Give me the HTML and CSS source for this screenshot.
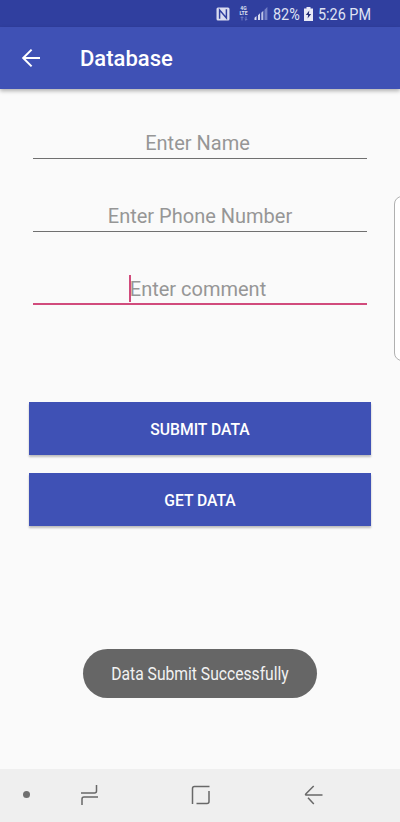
FILE: index.html
```html
<!DOCTYPE html>
<html lang="en">
<head>
<meta charset="utf-8">
<meta name="viewport" content="width=device-width">
<title>Database</title>
<link rel="stylesheet" href="styles.css">
</head>
<body>
<div class="screen">
  <div class="status">
    <svg class="nfc" width="14" height="14" viewBox="0 0 14 14"><rect x=".5" y=".5" width="13" height="13" rx="1.5" fill="#d9dcf0"/><path d="M3.6 11.8V3L10.4 11V2.2" fill="none" stroke="#303f9f" stroke-width="1.5"/></svg>
    <div class="lte"><span class="tiny">4G</span><span class="tiny">LTE</span>
      <svg width="8" height="5" viewBox="0 0 8 5"><path d="M2 4.5V.8M.7 2L2 .7 3.3 2M6 .5v3.7M4.7 3L6 4.3 7.3 3" fill="none" stroke="#7681c8" stroke-width=".9"/></svg>
    </div>
    <svg class="signal" width="14" height="14" viewBox="0 0 14 14"><path d="M.5 13v-2.3l2-1.7v4zM4 13V8.3l2-2V13z" fill="#d9dcf0"/><path d="M7.3 13V5.8l2-2V13z" fill="#bcc3e8"/><path d="M10.5 13V2.8L13.4 0v13z" fill="#7480c6"/></svg>
    <span class="percent"><span class="condensed">82%</span></span>
    <svg class="battery" width="9" height="14" viewBox="0 0 9 14"><path d="M2.5 0h4v1.5H9V14H0V1.5h2.5z" fill="#e8eaf6"/><path d="M5.3 3.4L1.8 8h2.3l-.5 3.5L7.2 7H4.9z" fill="#263078"/></svg>
    <span class="time"><span class="condensed">5:26 PM</span></span>
  </div>
  <header class="appbar">
    <svg class="back" width="20" height="20" viewBox="0 0 20 20"><path d="M19 10H2.3M10.6 1.6L2.2 10l8.4 8.4" fill="none" stroke="#fff" stroke-width="2"/></svg>
    <h1>Database</h1>
  </header>
  <main class="content">
    <div class="field name">Enter Name</div>
    <div class="field">Enter Phone Number</div>
    <div class="field focused"><span class="hint">Enter comment<i class="caret"></i></span></div>
    <div class="actions">
      <button class="action">SUBMIT DATA</button>
      <button class="action">GET DATA</button>
    </div>
  </main>
  <div class="edge-handle"></div>
  <div class="toast"><span class="toast-text">Data Submit Successfully</span></div>
  <nav class="navbar">
    <span class="dot"></span>
    <svg class="recents" width="20" height="22" viewBox="0 0 20 22"><path d="M1 9h13.5q2 0 2-2V1M18 13H4q-2 0-2 2v6" fill="none" stroke="#686868" stroke-width="1.5"/></svg>
    <svg class="home" width="20" height="20" viewBox="0 0 20 20"><path d="M1.5 19V3.5q0-2 2-2H18.5M18 6v10.5q0 2-2 2H5.5" fill="none" stroke="#686868" stroke-width="1.5"/></svg>
    <svg class="nav-back" width="20" height="20" viewBox="0 0 20 20"><path d="M18.5 10H2q-1-.3 0-1.3L9.7 1M4 12.8l5.8 6.2" fill="none" stroke="#686868" stroke-width="1.5"/></svg>
  </nav>
</div>
</body>
</html>
```
FILE: styles.css
```css
* { box-sizing: border-box; }
body { margin: 0; font-family: Roboto, sans-serif; background: #fafafa; }
.screen { position: relative; width: 400px; height: 822px; overflow: hidden; display: flex; flex-direction: column; background: #fafafa; }

.status { height: 27px; flex: none; display: flex; align-items: center; padding-left: 216px; background: #303f9f; color: #dfe2f3; font-size: 16px; white-space: nowrap; }
.nfc { margin-right: 9px; }
.lte { width: 9px; height: 15px; margin-right: 6px; display: flex; flex-direction: column; align-items: center; }
.tiny { height: 5px; font-size: 5px; line-height: 5px; font-weight: 700; }
.signal { margin-right: 5px; }
.percent { width: 26px; margin-right: 5px; }
.battery { margin-right: 5px; }
.time { width: 54px; }
.condensed { display: inline-block; padding-top: 1px; transform: scaleX(.9); transform-origin: left; }

.appbar { height: 62px; flex: none; display: flex; align-items: center; padding-left: 21px; background: #3f51b5; color: #fff; box-shadow: 0 2px 4px rgba(0, 0, 0, .3); }
.back { margin-right: 39px; }
.appbar h1 { margin: 0; padding-top: 2px; font-size: 22px; line-height: 28px; font-weight: 500; }

.content { flex: 1; padding: 35px 29px 0; }
.field { height: 35px; margin: 0 4px 38px; border-bottom: 1px solid #707070; text-align: center; color: #969696; font-size: 20px; line-height: 38px; }
.field.name { padding-right: 5px; line-height: 39px; }
.field.focused { height: 35px; padding-right: 4px; border-bottom: 2px solid #d14b7c; }
.hint { position: relative; }
.caret { position: absolute; left: -1px; top: -2px; width: 2px; height: 27px; background: #d14b7c; }
.actions { display: flex; flex-direction: column; gap: 18px; padding-top: 59px; }
.action { height: 53px; padding: 0; border: 0; background: #3f51b5; color: #fff; font: 500 15.7px/55px Roboto, sans-serif; box-shadow: 0 2px 2px rgba(0, 0, 0, .25); }

.edge-handle { position: absolute; left: 394px; top: 196px; width: 20px; height: 165px; border: 1px solid #b0b0b0; border-radius: 8px; background: #fff; }
.toast { position: absolute; left: 83px; top: 649px; width: 234px; height: 49px; border-radius: 25px; background: #666; color: #f2f2f2; display: flex; align-items: center; justify-content: center; font-size: 18px; white-space: nowrap; }
.toast-text { transform: scaleX(.87); }

.navbar { height: 53px; flex: none; display: flex; align-items: center; padding: 0 0 2px 23px; background: #efefef; }
.dot { width: 7px; height: 7px; border-radius: 50%; background: #707070; }
.recents { margin-left: 50px; }
.home { margin-left: 91px; }
.nav-back { margin-left: 93px; }
```
